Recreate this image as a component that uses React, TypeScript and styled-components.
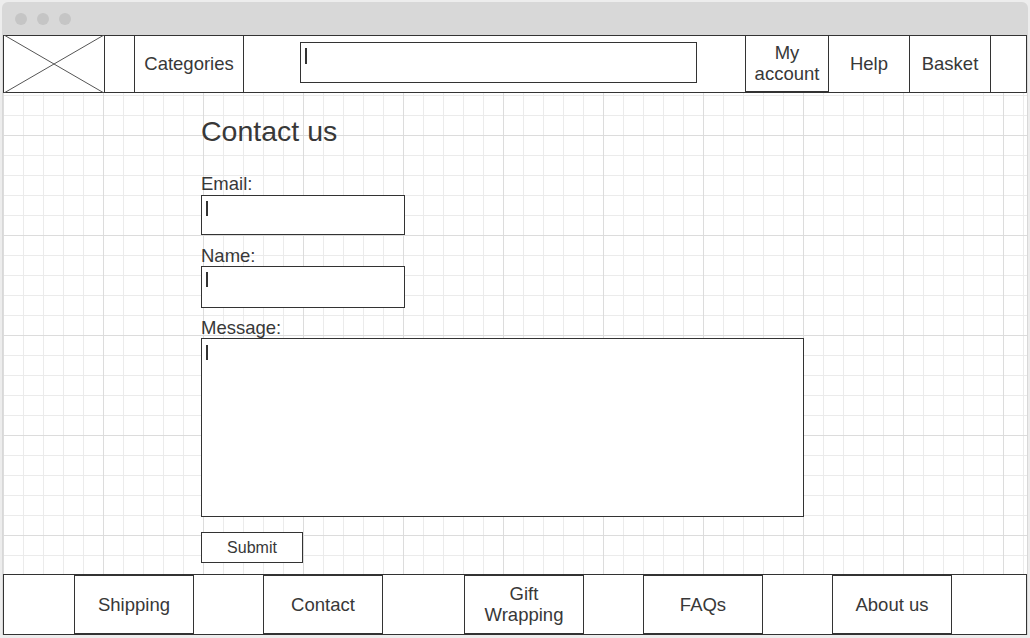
import React from "react";
import styled, { createGlobalStyle } from "styled-components";

const Global = createGlobalStyle`
  html, body {
    margin: 0;
    padding: 0;
    background: #ededed;
  }
  body {
    font-family: "Liberation Sans", Arial, sans-serif;
    color: #333;
  }
  * { box-sizing: border-box; }
`;

const Window = styled.div`
  margin: 2px 0 0 2px;
  width: 1026px;
  background: #d8d8d8;
  border-radius: 6px 6px 0 0;
  padding: 0 1px;
`;

const TitleBar = styled.div`
  height: 33px;
  display: flex;
  align-items: center;
  gap: 10px;
  padding-left: 12px;
`;

const Dot = styled.span`
  width: 12px;
  height: 12px;
  border-radius: 50%;
  background: #c5c5c5;
`;

const Page = styled.div`
  width: 1024px;
  display: flex;
  flex-direction: column;
  background: #fff;
`;

const Header = styled.header`
  height: 58px;
  border: 1px solid #333;
  background: #fff;
  display: flex;
  align-items: stretch;
`;

const Logo = styled.div`
  width: 101px;
  border-right: 1px solid #333;
  margin-top: -1px;
  margin-bottom: -1px;
  svg {
    display: block;
    width: 100%;
    height: 100%;
  }
`;

const NavCell = styled.div<{ $w: number; $ml?: number; $right?: boolean; $under?: boolean }>`
  width: ${(p) => p.$w}px;
  margin-left: ${(p) => p.$ml ?? 0}px;
  border-left: 1px solid #333;
  border-right: ${(p) => (p.$right ? "1px solid #333" : "none")};
  border-bottom: ${(p) => (p.$under ? "1px solid #333" : "none")};
  padding-bottom: ${(p) => (p.$under ? 1 : 2)}px;
  display: flex;
  align-items: center;
  justify-content: center;
  text-align: center;
  font-size: 18.5px;
  line-height: 21px;
  color: #383838;
`;

const Search = styled.div`
  width: 397px;
  height: 41px;
  margin: 6px 0 0 56px;
  border: 1px solid #333;
  background: #fff;
  padding: 5px 0 0 4px;
`;

const Caret = styled.span<{ $h?: number }>`
  display: block;
  width: 1.5px;
  height: ${(p) => p.$h ?? 15}px;
  background: #333;
`;

const Main = styled.main`
  height: 481px;
  background-color: #fff;
  background-image:
    linear-gradient(to right, #dcdcdc 1px, transparent 1px),
    linear-gradient(to bottom, #dcdcdc 1px, transparent 1px),
    linear-gradient(to right, #ebebeb 1px, transparent 1px),
    linear-gradient(to bottom, #ebebeb 1px, transparent 1px);
  background-size: 100px 100px, 100px 100px, 20px 20px, 20px 20px;
  background-position: 0 42px, 0 42px, 0 2px, 0 2px;
  padding: 22px 0 0 198px;
  display: flex;
  flex-direction: column;
  align-items: flex-start;
`;

const Heading = styled.h1`
  margin: 0;
  font-size: 28.5px;
  line-height: 32px;
  font-weight: normal;
  color: #383838;
`;

const Field = styled.div<{ $mt: number }>`
  margin-top: ${(p) => p.$mt}px;
  display: flex;
  flex-direction: column;
  align-items: flex-start;
`;

const Label = styled.label`
  font-size: 18.5px;
  line-height: 20px;
  color: #383838;
`;

const Box = styled.div<{ $w: number; $h: number; $mt?: number; $pt?: number }>`
  width: ${(p) => p.$w}px;
  height: ${(p) => p.$h}px;
  margin-top: ${(p) => p.$mt ?? 0}px;
  border: 1px solid #333;
  background: #fff;
  padding: ${(p) => p.$pt ?? 5}px 0 0 4px;
`;

const SubmitButton = styled.button`
  margin-top: 15px;
  width: 102px;
  height: 31px;
  border: 1px solid #333;
  background: #fff;
  font-family: "Liberation Sans", Arial, sans-serif;
  font-size: 16px;
  color: #383838;
  padding: 0;
  cursor: pointer;
`;

const Footer = styled.footer`
  height: 61px;
  border: 1px solid #333;
  background: #fff;
  display: flex;
  align-items: stretch;
`;

const Gap = styled.div<{ $w: number }>`
  width: ${(p) => p.$w}px;
`;

const FootButton = styled.div`
  width: 120px;
  border: 1px solid #333;
  display: flex;
  align-items: center;
  justify-content: center;
  text-align: center;
  font-size: 18.5px;
  line-height: 21px;
  padding-bottom: 1px;
  color: #383838;
`;

const footerItems: [number, React.ReactNode][] = [
  [70, "Shipping"],
  [69, "Contact"],
  [81, <>Gift<br />Wrapping</>],
  [59, "FAQs"],
  [69, "About us"],
];

export default function App() {
  return (
    <>
      <Global />
      <Window>
        <TitleBar>
          <Dot />
          <Dot />
          <Dot />
        </TitleBar>
        <Page>
          <Header>
            <Logo>
              <svg viewBox="0 0 100 100" preserveAspectRatio="none">
                <line x1="0" y1="0" x2="100" y2="100" stroke="#555" strokeWidth="1" vectorEffect="non-scaling-stroke" />
                <line x1="100" y1="0" x2="0" y2="100" stroke="#555" strokeWidth="1" vectorEffect="non-scaling-stroke" />
              </svg>
            </Logo>
            <NavCell $w={110} $ml={29} $right>Categories</NavCell>
            <Search>
              <Caret $h={16} />
            </Search>
            <NavCell $w={83} $ml={48} $under>
              My
              <br />
              account
            </NavCell>
            <NavCell $w={81}>Help</NavCell>
            <NavCell $w={81}>Basket</NavCell>
            <NavCell $w={36} />
          </Header>
          <Main>
            <Heading>Contact us</Heading>
            <Field $mt={27}>
              <Label>Email:</Label>
              <Box $w={204} $h={40} $mt={1}>
                <Caret />
              </Box>
            </Field>
            <Field $mt={11}>
              <Label>Name:</Label>
              <Box $w={204} $h={42}>
                <Caret />
              </Box>
            </Field>
            <Field $mt={10}>
              <Label>Message:</Label>
              <Box $w={603} $h={179} $pt={6}>
                <Caret />
              </Box>
            </Field>
            <SubmitButton>Submit</SubmitButton>
          </Main>
          <Footer>
            {footerItems.map(([gap, label], i) => (
              <React.Fragment key={i}>
                <Gap $w={gap} />
                <FootButton>{label}</FootButton>
              </React.Fragment>
            ))}
            <Gap $w={74} />
          </Footer>
        </Page>
      </Window>
    </>
  );
}
